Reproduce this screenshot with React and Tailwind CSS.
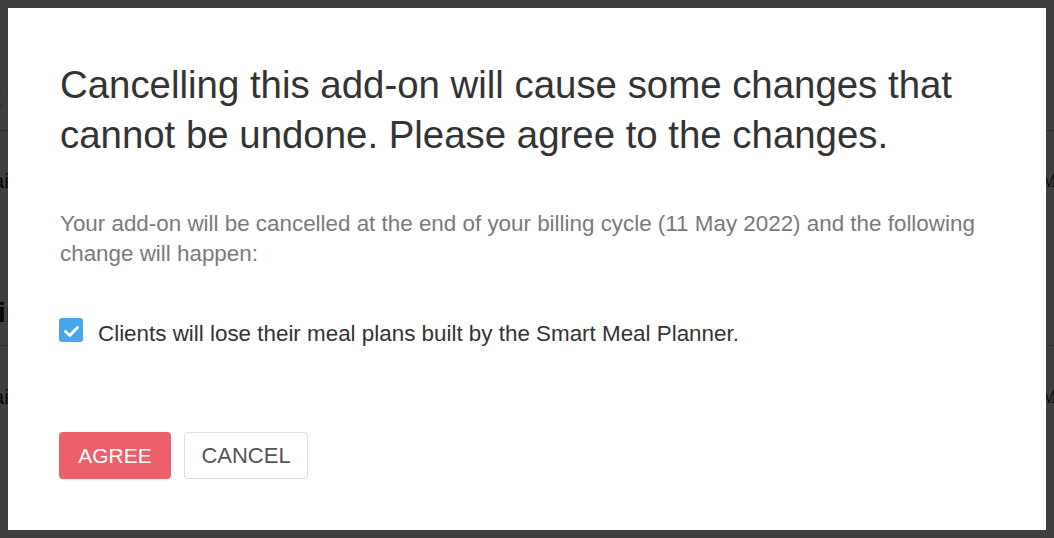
import React from "react";

const font = { fontFamily: '"Liberation Sans", Arial, Helvetica, sans-serif' };

function Background() {
  return (
    <div className="flex flex-col text-[#111]" style={font}>
      <div className="border-b border-[#bbb] pb-[16px] pt-[82px]">
        <span className="-ml-[46px] block text-[28px] font-bold leading-[32px]">Nut</span>
      </div>
      <div className="flex h-[100px] items-center justify-between">
        <span className="-ml-[38px] text-[20px]">Detail</span>
        <span className="-mr-[46px] font-serif text-[18px] text-[#1d3f66]">Manage</span>
      </div>
      <div className="border-b border-[#bbb] pb-[16px] pt-[66px]">
        <span className="-ml-[44px] block text-[28px] font-bold leading-[32px]">Plain</span>
      </div>
      <div className="flex h-[102px] items-center justify-between">
        <span className="-ml-[38px] text-[20px]">Detail</span>
        <span className="-mr-[46px] font-serif text-[18px] text-[#1d3f66]">Manage</span>
      </div>
      <div className="pt-[29px]">
        <span className="-ml-[58px] block text-[20px] leading-[24px]">Billing</span>
      </div>
    </div>
  );
}

export default function App() {
  return (
    <div className="relative h-[538px] w-[1054px] overflow-hidden bg-white">
      <Background />
      <div className="absolute inset-0 bg-black/75" />
      <div className="absolute inset-0 flex p-2">
        <div className="flex-1 bg-white pl-[52px] pr-[40px] pt-[52px]" style={font}>
          <h1 className="text-[38.4px] leading-[50px] text-[#333]">
            Cancelling this add-on will cause some changes that cannot be undone. Please agree to the changes.
          </h1>
          <p className="mt-[49px] text-[22.4px] leading-[30px] text-[#7a7a7a]">
            Your add-on will be cancelled at the end of your billing cycle (11 May 2022) and the following change will happen:
          </p>
          <label className="mt-[49px] flex items-center gap-[15px]">
            <span className="-ml-px mb-[7px] flex h-[24px] w-[24px] items-center justify-center rounded-[3px] bg-[#4aa5ef]">
              <svg width="24" height="24" viewBox="0 0 24 24" fill="none">
                <path d="M6.5 13.5l4.3 4L18.5 9.5" stroke="white" strokeWidth="3" strokeLinecap="round" strokeLinejoin="round" />
              </svg>
            </span>
            <span className="text-[22.4px] leading-[30px] text-[#333]">
              Clients will lose their meal plans built by the Smart Meal Planner.
            </span>
          </label>
          <div className="mt-[83px] flex gap-[13px]">
            <button className="-ml-px flex h-[47px] w-[112px] items-center justify-center rounded-[4px] bg-[#ec606b] text-[21px] text-white">
              AGREE
            </button>
            <button className="flex h-[47px] w-[124px] items-center justify-center rounded-[4px] border border-[#dcdfe3] bg-white text-[22px] text-[#555]">
              CANCEL
            </button>
          </div>
        </div>
      </div>
    </div>
  );
}
